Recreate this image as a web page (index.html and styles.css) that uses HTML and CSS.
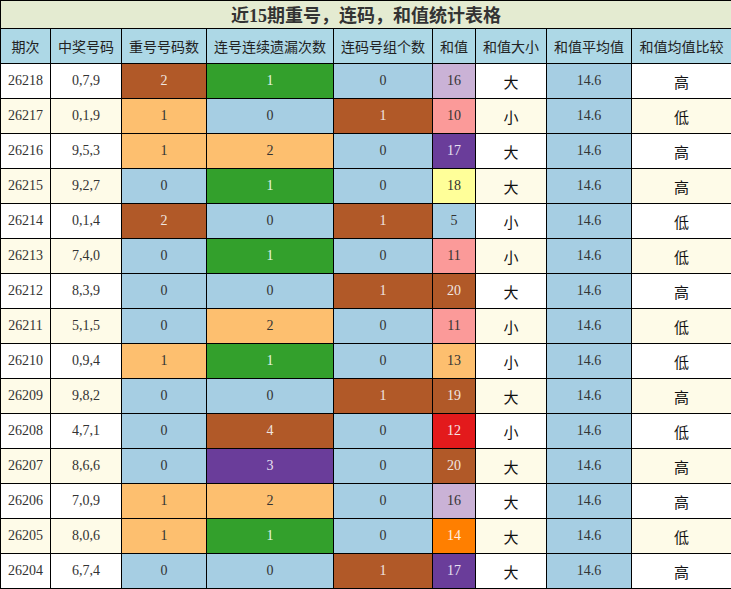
FILE: index.html
```html
<!DOCTYPE html>
<html lang="zh">
<head>
<meta charset="utf-8">
<title>近15期重号，连码，和值统计表格</title>
<link rel="stylesheet" href="styles.css">
</head>
<body>
<table class="stats">
<colgroup>
<col class="c1"><col class="c2"><col class="c3"><col class="c4"><col class="c5"><col class="c6"><col class="c7"><col class="c8"><col class="c9">
</colgroup>
<thead>
<tr class="title-row"><th colspan="9" class="title">近<span class="num">15</span>期重号，连码，和值统计表格</th></tr>
<tr class="head-row">
<th>期次</th><th>中奖号码</th><th>重号号码数</th><th>连号连续遗漏次数</th><th>连码号组个数</th><th>和值</th><th>和值大小</th><th>和值平均值</th><th>和值均值比较</th>
</tr>
</thead>
<tbody>
<tr class="w"><td>26218</td><td>0,7,9</td><td class="brown">2</td><td class="green">1</td><td class="lb">0</td><td class="lav">16</td><td class="cjk">大</td><td class="lb">14.6</td><td class="cjk">高</td></tr>
<tr class="iv"><td>26217</td><td>0,1,9</td><td class="lo">1</td><td class="lb">0</td><td class="brown">1</td><td class="pink">10</td><td class="cjk">小</td><td class="lb">14.6</td><td class="cjk">低</td></tr>
<tr class="w"><td>26216</td><td>9,5,3</td><td class="lo">1</td><td class="lo">2</td><td class="lb">0</td><td class="purple">17</td><td class="cjk">大</td><td class="lb">14.6</td><td class="cjk">高</td></tr>
<tr class="iv"><td>26215</td><td>9,2,7</td><td class="lb">0</td><td class="green">1</td><td class="lb">0</td><td class="yellow">18</td><td class="cjk">大</td><td class="lb">14.6</td><td class="cjk">高</td></tr>
<tr class="w"><td>26214</td><td>0,1,4</td><td class="brown">2</td><td class="lb">0</td><td class="brown">1</td><td class="lb">5</td><td class="cjk">小</td><td class="lb">14.6</td><td class="cjk">低</td></tr>
<tr class="iv"><td>26213</td><td>7,4,0</td><td class="lb">0</td><td class="green">1</td><td class="lb">0</td><td class="pink">11</td><td class="cjk">小</td><td class="lb">14.6</td><td class="cjk">低</td></tr>
<tr class="w"><td>26212</td><td>8,3,9</td><td class="lb">0</td><td class="lb">0</td><td class="brown">1</td><td class="brown">20</td><td class="cjk">大</td><td class="lb">14.6</td><td class="cjk">高</td></tr>
<tr class="iv"><td>26211</td><td>5,1,5</td><td class="lb">0</td><td class="lo">2</td><td class="lb">0</td><td class="pink">11</td><td class="cjk">小</td><td class="lb">14.6</td><td class="cjk">低</td></tr>
<tr class="w"><td>26210</td><td>0,9,4</td><td class="lo">1</td><td class="green">1</td><td class="lb">0</td><td class="lo">13</td><td class="cjk">小</td><td class="lb">14.6</td><td class="cjk">低</td></tr>
<tr class="iv"><td>26209</td><td>9,8,2</td><td class="lb">0</td><td class="lb">0</td><td class="brown">1</td><td class="brown">19</td><td class="cjk">大</td><td class="lb">14.6</td><td class="cjk">高</td></tr>
<tr class="w"><td>26208</td><td>4,7,1</td><td class="lb">0</td><td class="brown">4</td><td class="lb">0</td><td class="red">12</td><td class="cjk">小</td><td class="lb">14.6</td><td class="cjk">低</td></tr>
<tr class="iv"><td>26207</td><td>8,6,6</td><td class="lb">0</td><td class="purple">3</td><td class="lb">0</td><td class="brown">20</td><td class="cjk">大</td><td class="lb">14.6</td><td class="cjk">高</td></tr>
<tr class="w"><td>26206</td><td>7,0,9</td><td class="lo">1</td><td class="lo">2</td><td class="lb">0</td><td class="lav">16</td><td class="cjk">大</td><td class="lb">14.6</td><td class="cjk">高</td></tr>
<tr class="iv"><td>26205</td><td>8,0,6</td><td class="lo">1</td><td class="green">1</td><td class="lb">0</td><td class="orange">14</td><td class="cjk">大</td><td class="lb">14.6</td><td class="cjk">低</td></tr>
<tr class="w"><td>26204</td><td>6,7,4</td><td class="lb">0</td><td class="lb">0</td><td class="brown">1</td><td class="purple">17</td><td class="cjk">大</td><td class="lb">14.6</td><td class="cjk">高</td></tr>
</tbody>
</table>
</body>
</html>
```

FILE: styles.css
```css
html, body {
  margin: 0;
  padding: 0;
  background: #ffffff;
}

.stats {
  border-collapse: collapse;
  table-layout: fixed;
  width: 731px;
  font-family: "Liberation Serif", "Times New Roman", serif;
  font-size: 14px;
  color: #333333;
}

.c1 { width: 50px; }
.c2 { width: 71px; }
.c3 { width: 85px; }
.c4 { width: 127px; }
.c5 { width: 99px; }
.c6 { width: 43px; }
.c7 { width: 71px; }
.c8 { width: 85px; }
.c9 { width: 100px; }

.stats th,
.stats td {
  border: 1px solid #000000;
  padding: 0;
  text-align: center;
  vertical-align: middle;
}

.title-row th {
  height: 27px;
  background: #e4ebd1;
  font-family: "Noto Sans CJK SC", sans-serif;
  font-weight: bold;
  font-size: 18px;
  color: #333333;
  line-height: 20px;
}

.title .num {
  font-family: "Liberation Serif", serif;
  font-weight: bold;
}

.head-row th {
  height: 34px;
  background: #add8e6;
  font-family: "Noto Sans CJK SC", sans-serif;
  font-weight: normal;
  font-size: 14px;
  color: #222222;
}

.stats td {
  height: 34px;
}

.w td { background: #ffffff; }
.iv td { background: #fefbe8; }

.stats td.cjk {
  font-family: "Noto Sans CJK SC", sans-serif;
  font-size: 15px;
  color: #111111;
}

.stats td.lb { background: #a6cee3; }
.stats td.lo { background: #fdbf6f; }
.stats td.pink { background: #fb9a99; }
.stats td.lav { background: #cab2d6; }
.stats td.yellow { background: #ffff99; }
.stats td.brown { background: #b15928; color: #f0e6e0; }
.stats td.green { background: #33a02c; color: #e8f5e6; }
.stats td.purple { background: #6a3d9a; color: #e8e0f0; }
.stats td.red { background: #e31a1c; color: #f5e6e6; }
.stats td.orange { background: #ff7f00; color: #fff0e0; }
```
